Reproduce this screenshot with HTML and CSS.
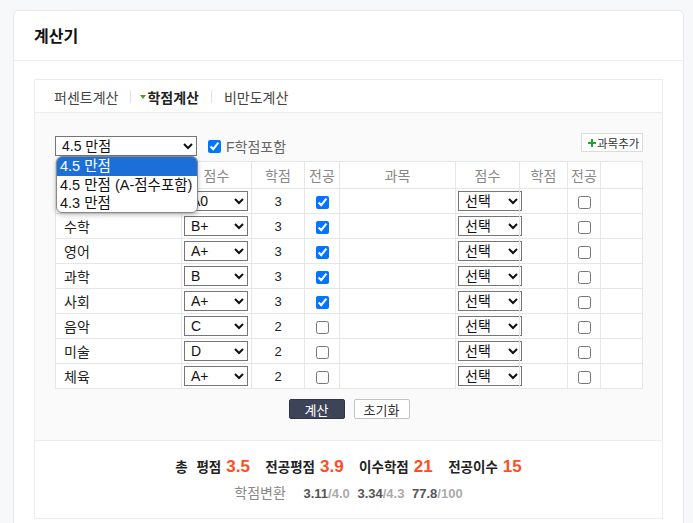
FILE: index.html
```html
<!DOCTYPE html>
<html lang="ko">
<head>
    <meta charset="UTF-8">
    <meta name="viewport" content="width=device-width, initial-scale=1.0">
    <title>계산기</title>
    <link rel="stylesheet" href="styles.css">
</head>
<body>

    <div class="card">
        <div class="card-head">계산기</div>

        <div class="card-body">
            <div class="calc">

                <!-- 탭 -->
                <div class="tabs">
                    <a href="#" class="tab">퍼센트계산</a>
                    <span class="tab-sep"></span>
                    <a href="#" class="tab on"><svg class="tab-arrow" width="6" height="4" viewBox="0 0 6 4"><path d="M0 0H6L3 4Z" fill="#4e9a1e"/></svg>학점계산</a>
                    <span class="tab-sep"></span>
                    <a href="#" class="tab">비만도계산</a>
                </div>

                <!-- 입력 -->
                <div class="calc-form">
                    <div class="toolbar">
                        <select class="scale">
                            <option>4.5 만점</option>
                            <option>4.5 만점 (A-점수포함)</option>
                            <option>4.3 만점</option>
                        </select>
                        <label class="f-check"><input type="checkbox" checked>F학점포함</label>
                        <button class="add-btn"><svg width="8" height="8" viewBox="0 0 8 8"><path d="M3 0H5V3H8V5H5V8H3V5H0V3H3Z" fill="#22a030"/></svg>과목추가</button>

                        <!-- 열린 선택 목록 -->
                        <ul class="scale-menu">
                            <li class="sel">4.5 만점</li>
                            <li>4.5 만점 (A-점수포함)</li>
                            <li>4.3 만점</li>
                        </ul>
                    </div>

                    <table class="grade-table">
                        <colgroup>
                            <col style="width:126px"><col style="width:70px"><col style="width:53px"><col style="width:35px">
                            <col style="width:116px"><col style="width:64px"><col style="width:48px"><col style="width:33px"><col>
                        </colgroup>
                        <thead>
                            <tr>
                                <th>과목</th><th>점수</th><th>학점</th><th>전공</th>
                                <th>과목</th><th>점수</th><th>학점</th><th>전공</th><th></th>
                            </tr>
                        </thead>
                        <tbody id="rows"></tbody>
                    </table>

                    <div class="actions">
                        <button class="btn-calc">계산</button>
                        <button class="btn-reset">초기화</button>
                    </div>
                </div>

                <!-- 결과 -->
                <div class="result">
                    <p class="result-main">
                        <span class="r-label">총 평점</span><span class="r-num">3.5</span>
                        <span class="r-label">전공평점</span><span class="r-num">3.9</span>
                        <span class="r-label">이수학점</span><span class="r-num">21</span>
                        <span class="r-label">전공이수</span><span class="r-num">15</span>
                    </p>
                    <p class="result-sub">
                        <span class="conv-label">학점변환</span>
                        <span class="conv"><b>3.11</b>/4.0</span>
                        <span class="conv"><b>3.34</b>/4.3</span>
                        <span class="conv"><b>77.8</b>/100</span>
                    </p>
                </div>

            </div>
        </div>
    </div>

    <script>
        const subjects = [
            ['국어', 'A0', 3, true],
            ['수학', 'B+', 3, true],
            ['영어', 'A+', 3, true],
            ['과학', 'B', 3, true],
            ['사회', 'A+', 3, true],
            ['음악', 'C', 2, false],
            ['미술', 'D', 2, false],
            ['체육', 'A+', 2, false]
        ];
        const grades = ['A+', 'A0', 'B+', 'B', 'C+', 'C', 'D+', 'D', 'F'];

        function gradeSelect(value) {
            let html = '<select class="grade-sel">';
            if (!value) html += '<option>선택</option>';
            grades.forEach(g => {
                html += '<option' + (g === value ? ' selected' : '') + '>' + g + '</option>';
            });
            return html + '</select>';
        }

        const body = document.getElementById('rows');
        subjects.forEach(s => {
            const tr = document.createElement('tr');
            tr.innerHTML =
                '<td class="subj">' + s[0] + '</td>' +
                '<td class="pick">' + gradeSelect(s[1]) + '</td>' +
                '<td class="mid">' + s[2] + '</td>' +
                '<td class="mid"><input type="checkbox"' + (s[3] ? ' checked' : '') + '></td>' +
                '<td class="subj"></td>' +
                '<td class="pick">' + gradeSelect('') + '</td>' +
                '<td class="mid"></td>' +
                '<td class="mid"><input type="checkbox"></td>' +
                '<td></td>';
            body.appendChild(tr);
        });
    </script>
</body>
</html>
```

FILE: styles.css
```css
body, html {
    margin: 0;
    padding: 0;
    background-color: #f7f8fa;
    font-family: "Liberation Sans", "Noto Sans CJK KR", sans-serif;
    color: #333;
}

body {
    padding-top: 10px;
}

.card {
    margin-left: 13px;
    width: 671px;
    box-sizing: border-box;
    background: #fff;
    border: 1px solid #e6e8eb;
    border-radius: 5px;
    height: 560px;
}

.card-head {
    padding: 16px 20px 13px;
    line-height: 20px;
    font-size: 16px;
    font-weight: bold;
    color: #111;
    border-bottom: 1px solid #eceef0;
}

.card-body {
    padding: 18px 20px 0;
}

.calc {
    border: 1px solid #ececec;
}

/* 탭 */
.tabs {
    display: flex;
    align-items: center;
    height: 33px;
    box-sizing: border-box;
    padding: 1px 0 0 19px;
    border-bottom: 1px solid #ececec;
    font-size: 14px;
}

.tab {
    color: #444;
    text-decoration: none;
    display: flex;
    align-items: center;
}

.tab.on {
    color: #222;
    font-weight: bold;
}

.tab-arrow {
    margin: 0 1px 0 -3px;
}

.tab-sep {
    width: 1px;
    height: 13px;
    background: #e2e2e2;
    margin: 0 12px;
}

/* 입력 */
.calc-form {
    background: #fafafa;
    padding: 20px 19px 21px 20px;
}

.toolbar {
    position: relative;
    display: flex;
    align-items: flex-start;
    height: 23px;
    margin-bottom: 5px;
}

.scale {
    width: 142px;
    height: 20px;
    margin: 3px 0 0;
    padding: 0 0 0 2px;
    font: 14px "Liberation Sans", "Noto Sans CJK KR", sans-serif;
    color: #111;
    background: #fff;
}

.f-check {
    display: flex;
    align-items: center;
    margin: 3px 0 0 10px;
    height: 20px;
    font-size: 14px;
    color: #666;
}

.f-check input {
    margin: 0 5px 0 1px;
}

.add-btn {
    margin-left: auto;
    width: 62px;
    height: 19px;
    padding: 0 0 0 6px;
    display: flex;
    align-items: center;
    gap: 1px;
    background: #fff;
    border: 1px solid #dcdcdc;
    font: 11.5px "Noto Sans CJK KR", sans-serif;
    color: #333;
}

.scale-menu {
    position: absolute;
    top: 23px;
    left: 1px;
    width: 142px;
    box-sizing: border-box;
    margin: 0;
    padding: 0;
    list-style: none;
    background: #fff;
    border: 1px solid #8a8a8a;
    border-radius: 6px;
    box-shadow: 0 2px 5px rgba(0, 0, 0, 0.25);
    overflow: hidden;
    z-index: 2;
    font: 14.5px "Liberation Sans", "Noto Sans CJK KR", sans-serif;
    color: #111;
}

.scale-menu li {
    height: 18px;
    line-height: 18px;
    padding-left: 3px;
    white-space: nowrap;
}

.scale-menu li.sel {
    height: 19px;
    line-height: 19px;
    background: #1d6fd8;
    color: #fff;
}

/* 표 */
.grade-table {
    width: 588px;
    table-layout: fixed;
    border-collapse: collapse;
    background: #fff;
    font-size: 14px;
}

.grade-table th,
.grade-table td {
    border: 1px solid #e6e6e6;
    padding: 0;
}

.grade-table th {
    height: 26px;
    font-weight: normal;
    color: #888;
    text-align: center;
}

.grade-table td {
    height: 24px;
}

.grade-table td.subj {
    padding-left: 8px;
    color: #222;
}

.grade-table td.pick {
    padding-left: 2px;
}

.grade-table td.mid {
    text-align: center;
    color: #222;
    font-size: 13px;
}

.grade-table td.mid input {
    margin: 0;
    vertical-align: middle;
}

.grade-sel {
    display: block;
    width: 64px;
    height: 20px;
    padding: 0 0 0 2px;
    font: 14px "Liberation Sans", "Noto Sans CJK KR", sans-serif;
    color: #111;
    background: #fff;
}

.actions {
    display: flex;
    justify-content: center;
    gap: 9px;
    margin-top: 10px;
}

.actions button {
    width: 56px;
    height: 20px;
    padding: 0;
    border-radius: 2px;
    font: 13px "Noto Sans CJK KR", sans-serif;
}

.btn-calc {
    background: #3d4458;
    border: 1px solid #2f3547;
    color: #fff;
}

.btn-reset {
    background: #fff;
    border: 1px solid #c4c4c4;
    color: #333;
}

/* 결과 */
.result {
    border-top: 1px solid #ececec;
    padding: 16px 0 15px;
    text-align: center;
}

.result p {
    margin: 0;
}

.result-main {
    line-height: 20px;
}

.r-label {
    font-size: 13.5px;
    font-weight: bold;
    color: #222;
    margin: 0 5px 0 11px;
    word-spacing: 5px;
}

.r-label:first-child {
    margin-left: 0;
}

.r-num {
    font-size: 17px;
    font-weight: bold;
    color: #ff4d1f;
}

.result-sub {
    margin-top: 6px !important;
    line-height: 18px;
    font-size: 13px;
}

.conv-label {
    font-size: 14px;
    color: #888;
    margin-right: 10px;
}

.conv {
    font-weight: bold;
    color: #aaa;
    margin-left: 4px;
}

.conv b {
    color: #555;
}
```
